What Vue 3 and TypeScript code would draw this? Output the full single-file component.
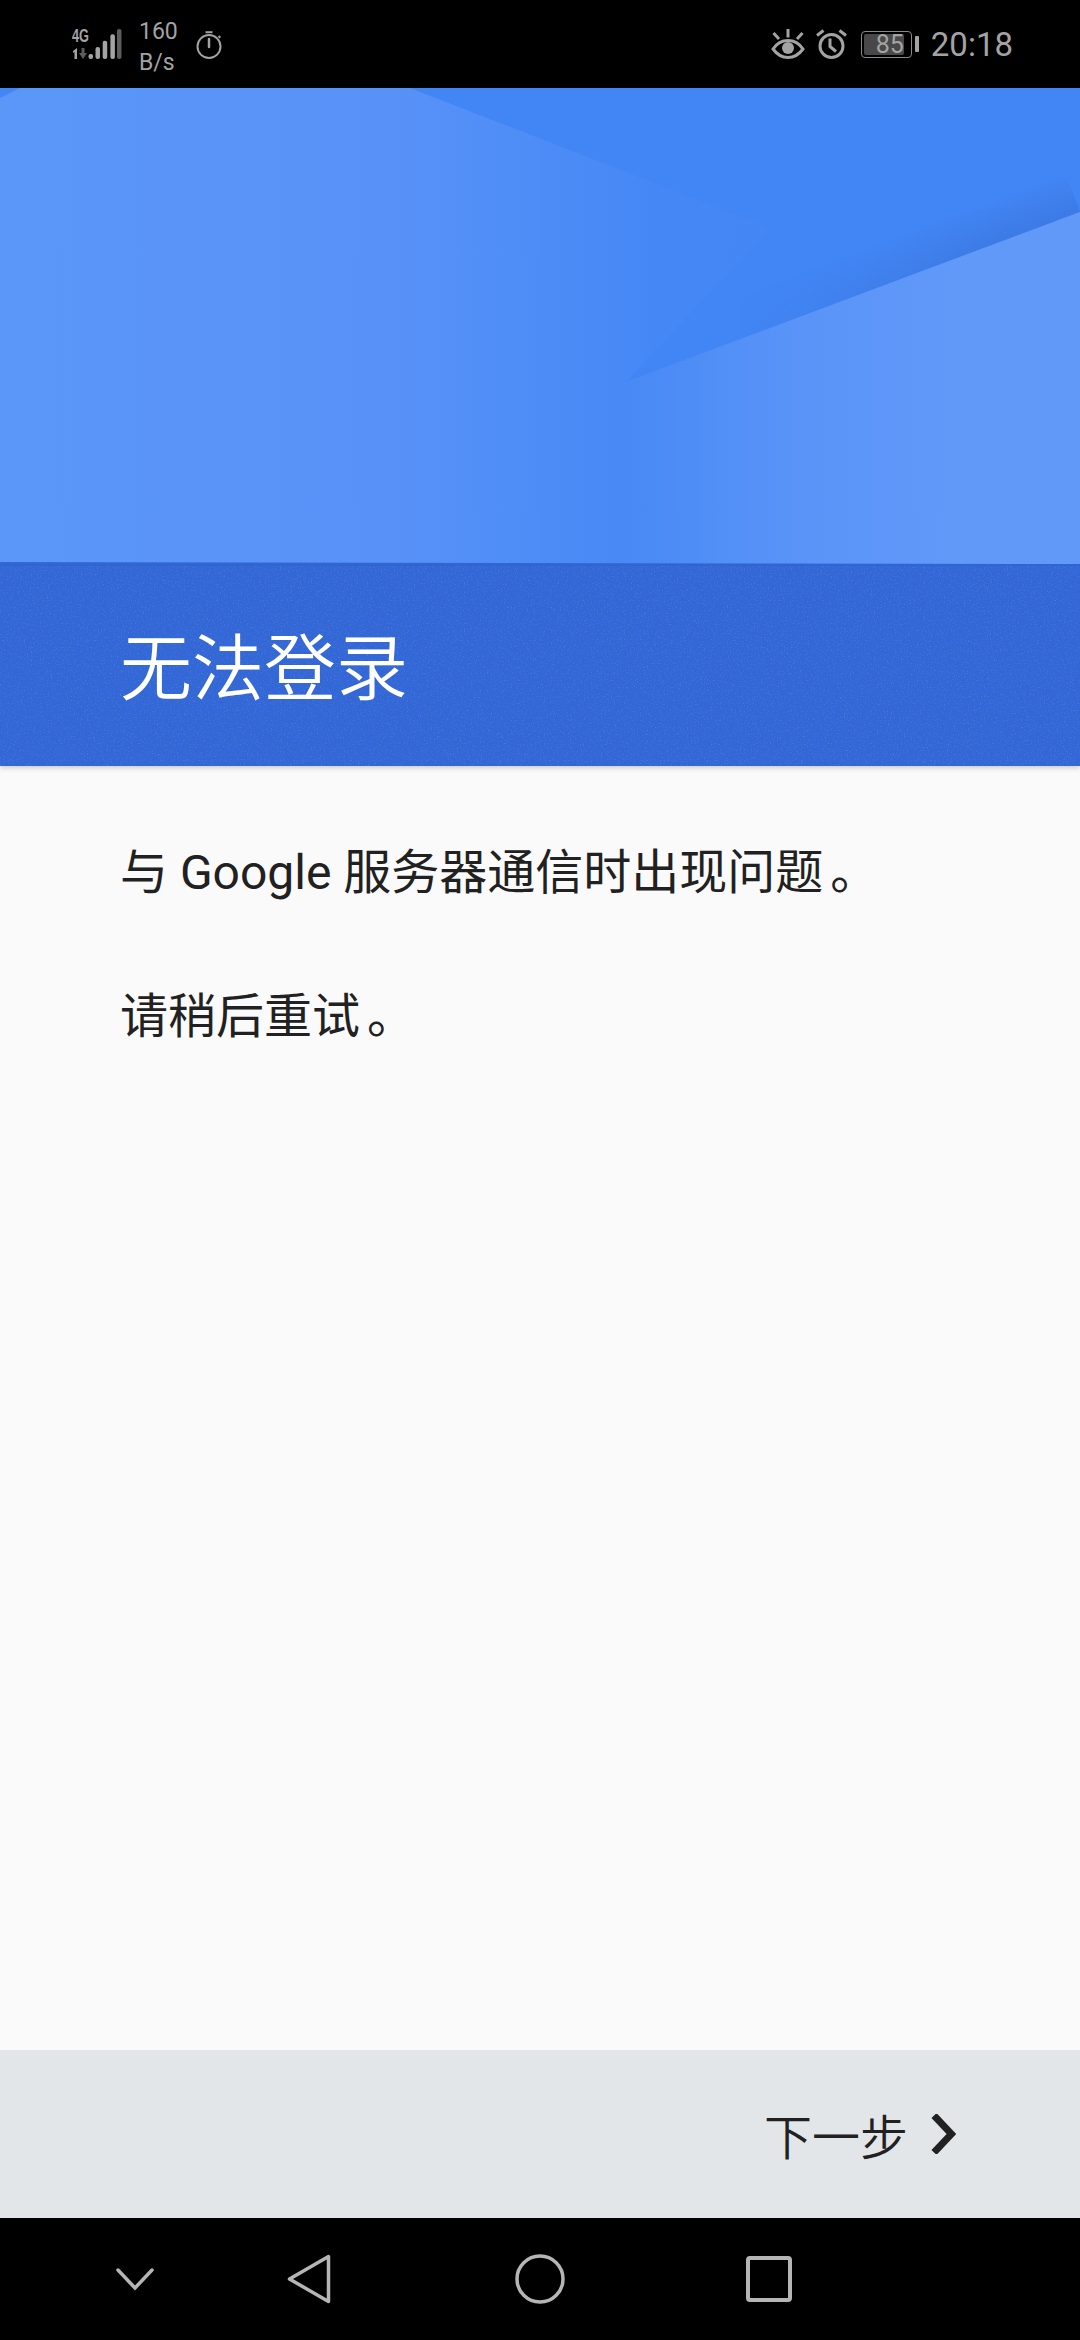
<template>
  <div class="screen">
    <header class="status">
      <div class="status__group">
        <svg class="signal" width="50" height="37" viewBox="0 -4 50 37">
          <text x="0" y="15" class="signal__label" textLength="17" lengthAdjust="spacingAndGlyphs">4G</text>
          <path d="M1 24l4-3v11H2.500v-7L1 26z" fill="#a3a3a3" />
          <path d="M9.500 21h3v5h2.500l-4 6-4-6h2.500z" fill="#5c5c5c" />
          <rect x="16.500" y="27" width="4.500" height="5" rx="2" fill="#a3a3a3" />
          <rect x="23.500" y="20" width="4.500" height="12" rx="2" fill="#a3a3a3" />
          <rect x="30.700" y="13.700" width="4.500" height="18.300" rx="2" fill="#a3a3a3" />
          <rect x="38.400" y="7.300" width="4.500" height="24.700" rx="2" fill="#a3a3a3" />
          <rect x="45" y="2" width="4.500" height="30" rx="2" fill="#5c5c5c" />
        </svg>
        <div class="speed">
          <span>{{ speed }}</span>
          <span>{{ speedUnit }}</span>
        </div>
        <svg class="timer" width="26" height="28" viewBox="0 0 26 28" fill="none" stroke="#a3a3a3" stroke-width="2">
          <circle cx="13" cy="15.500" r="11.500" />
          <path d="M9.500 1.200h7" />
          <path d="M22.500 5l1.800 1.800" />
          <path d="M13 8v8" stroke-width="2.500" stroke-linecap="round" />
        </svg>
      </div>
      <div class="status__group">
        <svg class="eye" width="34" height="30" viewBox="0 0 34 30" fill="none" stroke="#a3a3a3" stroke-width="3">
          <path d="M2 20C6 14 11 11.500 17 11.500S28 14 32 20C28 25.500 23 28.500 17 28.500S6 25.500 2 20z" />
          <circle cx="17" cy="19" r="6" fill="#a3a3a3" stroke="none" />
          <path d="M17 0v8.500M2.500 4l5.500 6M31.500 4L26 10" />
        </svg>
        <svg class="alarm" width="31" height="30" viewBox="0 0 31 30" fill="none" stroke="#a3a3a3" stroke-width="3">
          <circle cx="15.500" cy="17" r="11.500" />
          <path d="M14 9.500v8l6 5" />
          <path d="M1 6.500l6.500-5M30 6.500l-6.500-5" />
        </svg>
        <div class="battery">
          <div class="battery__body">
            <div class="battery__level">{{ batteryLevel }}</div>
          </div>
          <div class="battery__nub"></div>
        </div>
        <span class="clock">{{ clock }}</span>
      </div>
    </header>

    <section class="hero">
      <svg class="hero__art" width="1080" height="478" viewBox="0 0 1080 478">
        <defs>
          <linearGradient id="leftFill" gradientUnits="userSpaceOnUse" x1="0" y1="0" x2="1080" y2="0">
            <stop offset="0" stop-color="#5b96f9" />
            <stop offset="0.36" stop-color="#5892f8" />
            <stop offset="0.62" stop-color="#4487f5" />
            <stop offset="1" stop-color="#4285f4" />
          </linearGradient>
          <linearGradient id="rightFill" gradientUnits="userSpaceOnUse" x1="620" y1="0" x2="960" y2="0">
            <stop offset="0" stop-color="#4889f5" />
            <stop offset="0.55" stop-color="#5a94f8" />
            <stop offset="1" stop-color="#6199f9" />
          </linearGradient>
          <linearGradient id="ridgeShade" gradientUnits="userSpaceOnUse" x1="950" y1="172.600" x2="936" y2="135">
            <stop offset="0" stop-color="#3a76de" stop-opacity="0.7" />
            <stop offset="1" stop-color="#3a76de" stop-opacity="0" />
          </linearGradient>
          <linearGradient id="ridgeFade" gradientUnits="userSpaceOnUse" x1="740" y1="0" x2="1000" y2="0">
            <stop offset="0" stop-color="#000" />
            <stop offset="1" stop-color="#fff" />
          </linearGradient>
          <mask id="ridgeMask" maskUnits="userSpaceOnUse" x="0" y="0" width="1080" height="478">
            <rect width="1080" height="478" fill="url(#ridgeFade)" />
          </mask>
        </defs>
        <rect width="1080" height="478" fill="#4285f4" />
        <path d="M0 0H410L770 140 620 300 620 478H0z" fill="url(#leftFill)" />
        <path d="M0 0H20L0 10z" fill="#4285f4" />
        <path d="M1080 124L620 296 606 259 1066 87z" fill="url(#ridgeShade)" mask="url(#ridgeMask)" />
        <path d="M1080 124L620 296V478H1080z" fill="url(#rightFill)" />
        <path d="M0 474L1080 476V478H0z" fill="#3367d6" />
      </svg>
      <div class="hero__band">
        <svg class="hero__noise" width="1080" height="200">
          <filter id="speckle">
            <feTurbulence type="fractalNoise" baseFrequency="0.7" numOctaves="2" seed="4" />
            <feColorMatrix values="0 0 0 0 0.55  0 0 0 0 0.7  0 0 0 0 1  0 0 0 1.4 -0.75" />
          </filter>
          <rect width="1080" height="200" filter="url(#speckle)" opacity="0.35" />
        </svg>
        <h1 class="hero__title">{{ title }}</h1>
      </div>
    </section>

    <main class="message">
      <p v-for="line in lines" :key="line">{{ line }}<span class="message__stop">。</span></p>
    </main>

    <footer class="actions">
      <span class="actions__label">{{ nextLabel }}</span>
      <svg width="25" height="40" viewBox="0 0 25 40" fill="none" stroke="#212121" stroke-width="7">
        <path d="M3 1.500L20.500 20 3 38.500" />
      </svg>
    </footer>

    <nav class="navbar">
      <svg width="40" height="24" viewBox="0 0 40 24" fill="none" stroke="#b5b5b5" stroke-width="3.500" stroke-linecap="round">
        <path d="M3 3l17 18L37 3" />
      </svg>
      <svg width="44" height="50" viewBox="0 0 44 50" fill="none" stroke="#b5b5b5" stroke-width="3.500" stroke-linejoin="round">
        <path d="M41.500 2.500v45L2.500 25z" />
      </svg>
      <svg width="50" height="50" viewBox="0 0 50 50" fill="none" stroke="#b5b5b5" stroke-width="3.500">
        <circle cx="25" cy="25" r="23" />
      </svg>
      <svg width="46" height="46" viewBox="0 0 46 46" fill="none" stroke="#b5b5b5" stroke-width="4" stroke-linejoin="round">
        <rect x="2" y="2" width="42" height="42" rx="2" />
      </svg>
    </nav>
  </div>
</template>

<script setup lang="ts">
const speed = '160'
const speedUnit = 'B/s'
const batteryLevel = 85
const clock = '20:18'
const title = '无法登录'
const nextLabel = '下一步'
const lines: string[] = ['与 Google 服务器通信时出现问题', '请稍后重试']
</script>

<style>
html,
body {
  margin: 0;
  background: #000;
}
</style>

<style scoped>
.screen {
  display: flex;
  flex-direction: column;
  width: 1080px;
  height: 2340px;
  overflow: hidden;
  font-family: Roboto, 'Noto Sans CJK SC', sans-serif;
  background: #fafafa;
}

.status {
  display: flex;
  flex: none;
  align-items: center;
  justify-content: space-between;
  height: 88px;
  padding: 0 67px 0 72px;
  background: #000;
  color: #a3a3a3;
}

.status__group {
  display: flex;
  align-items: center;
}

.signal {
  margin-top: -5px;
}

.signal__label {
  font-family: 'Liberation Sans', sans-serif;
  font-size: 19px;
  font-weight: 700;
  fill: #a3a3a3;
}

.speed {
  display: flex;
  flex-direction: column;
  margin-top: 5px;
  margin-left: 17px;
  font-size: 23px;
  line-height: 31px;
}

.timer {
  margin-left: 18px;
  margin-top: 2px;
}

.eye {
  margin-right: 11px;
}

.alarm {
  margin-right: 14px;
}

.battery {
  display: flex;
  align-items: center;
  margin-right: 12px;
}

.battery__body {
  box-sizing: border-box;
  width: 51px;
  height: 27px;
  padding: 2px;
  border: 1px solid #8a8a8a;
  border-radius: 4px;
}

.battery__level {
  width: 40px;
  height: 21px;
  border-radius: 2px;
  background: #484848;
  font-size: 25px;
  line-height: 21px;
  text-align: right;
}

.battery__nub {
  width: 4px;
  height: 16px;
  margin-left: 3px;
  border-radius: 1px;
  background: #a3a3a3;
}

.clock {
  font-size: 33px;
  line-height: 1;
}

.hero {
  flex: none;
}

.hero__art {
  display: block;
}

.hero__band {
  position: relative;
  display: flex;
  align-items: center;
  box-sizing: border-box;
  height: 200px;
  padding: 8px 0 0 120px;
  background: #3367d6;
  box-shadow: 0 2px 5px rgba(0, 0, 0, 0.18);
}

.hero__noise {
  position: absolute;
  top: 0;
  left: 0;
}

.hero__title {
  position: relative;
  margin: 0;
  color: #fff;
  font-size: 72px;
  font-weight: 350;
  line-height: 1.2;
}

.message {
  flex: 1;
  padding: 71px 100px 0 120px;
  color: #212121;
  font-size: 48px;
  line-height: 72px;
}

.message p {
  margin: 0 0 72px;
}

.message__stop {
  padding-left: 7px;
}

.actions {
  display: flex;
  flex: none;
  align-items: center;
  justify-content: flex-end;
  gap: 23px;
  height: 168px;
  padding-right: 124px;
  background: #e3e6e9;
  color: #212121;
  font-size: 48px;
  font-weight: 350;
}

.navbar {
  display: grid;
  flex: none;
  grid-template-columns: 172px 228px 231px 46px;
  align-items: center;
  height: 122px;
  padding-left: 115px;
  background: #000;
}
</style>
